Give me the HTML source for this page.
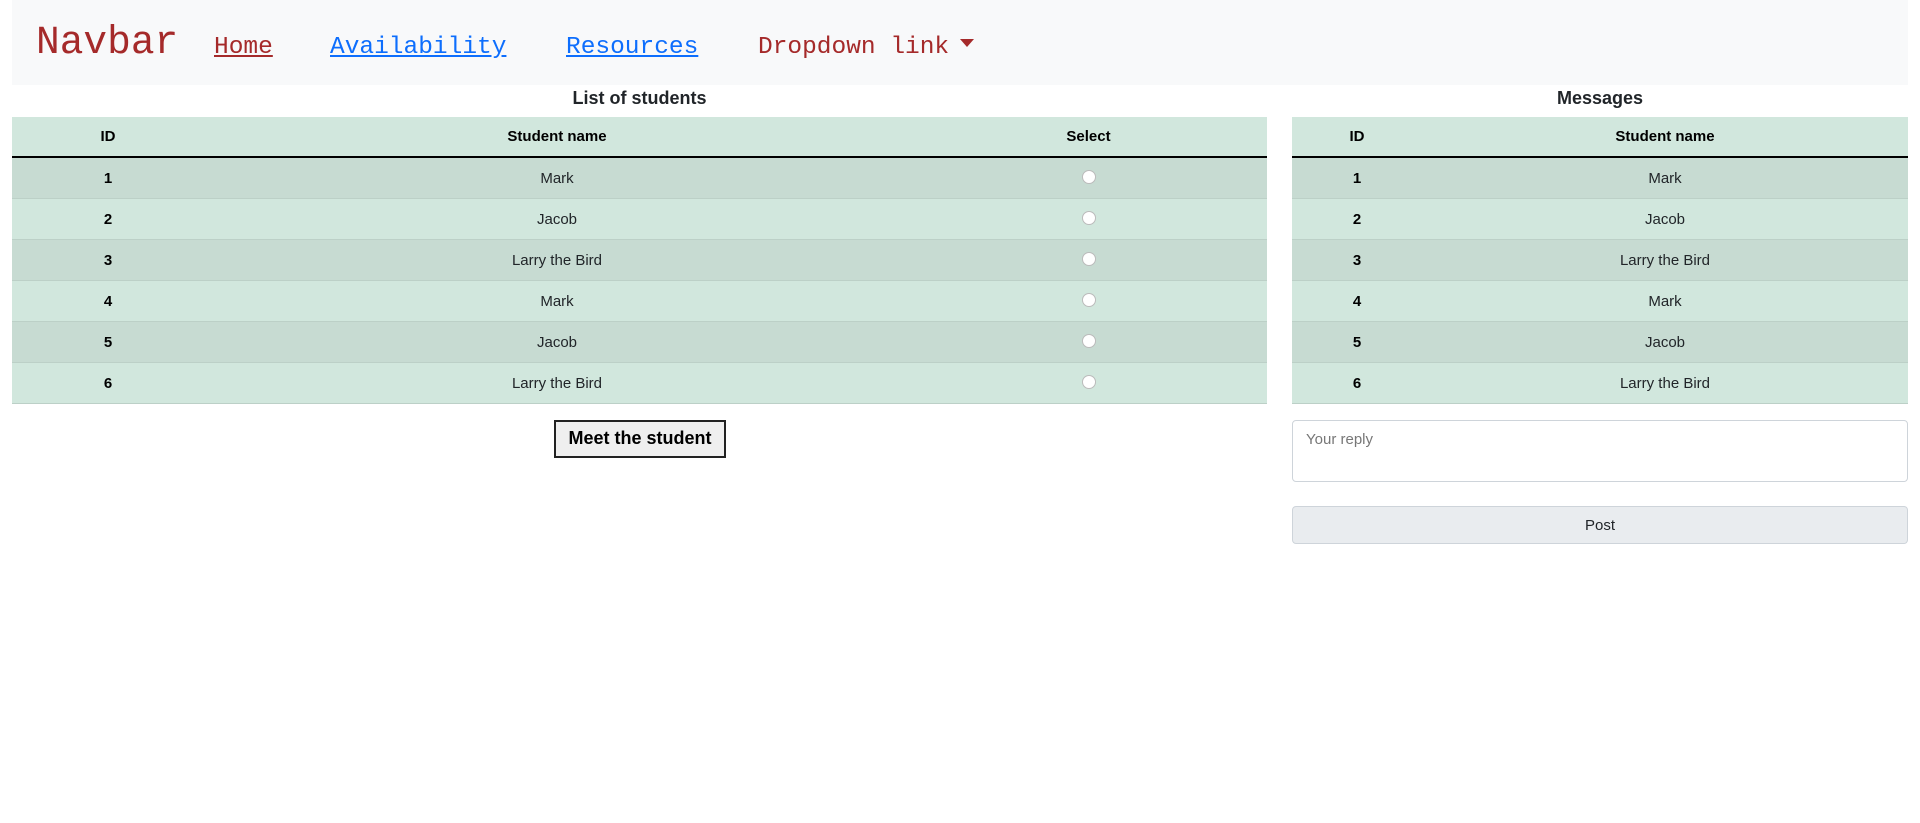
<!DOCTYPE html>
<html><head><meta charset="utf-8"><style>
*{box-sizing:border-box;margin:0;padding:0}
body{width:1920px;height:823px;background:#fff;font-family:"Liberation Sans",sans-serif;color:#212529;position:relative;overflow:hidden}
.nav{position:absolute;left:12px;top:0;width:1896px;height:85px;background:#f8f9fa}
.nav span,.nav a{position:absolute;font-family:"Liberation Mono","Courier New",monospace;white-space:nowrap}
.brand{left:24px;top:20px;font-size:39.5px;color:#a52a2a}
.lk{top:34px;font-size:24.5px;text-decoration:underline}
.title{position:absolute;top:88px;font-size:18px;font-weight:bold;text-align:center;color:#212529}
table{position:absolute;border-collapse:collapse;font-size:15px;table-layout:fixed}
th,td{text-align:center;height:41px;padding:0}
thead tr{background:#d1e7dd;height:40px}
thead th{border-bottom:2px solid #000;height:40px;color:#000}
tbody tr:nth-child(odd){background:#c7dbd2}
tbody tr:nth-child(even){background:#d1e7dd}
tbody tr{border-bottom:1px solid #bcd0c7}
td:first-child{font-weight:bold;color:#000}
td{padding-top:2px}
.radio{display:inline-block;width:14px;height:14px;border-radius:50%;background:#fff;border:1px solid #bbb;vertical-align:middle;margin-top:-4px}
.btn{position:absolute;left:554px;top:420px;width:172px;height:38px;border:2px solid #222;background:#efefef;font-size:18px;font-weight:bold;text-align:center;line-height:33px;color:#000}
.ta{position:absolute;left:1292px;top:420px;width:616px;height:62px;border:1px solid #ced4da;border-radius:4px;background:#fff;color:#777;font-size:15px;padding:10px 13px}
.post{position:absolute;left:1292px;top:506px;width:616px;height:38px;border:1px solid #ced4da;border-radius:4px;background:#e9ecef;font-size:15px;text-align:center;line-height:38px}
</style></head><body>
<div class="nav">
<span class="brand">Navbar</span>
<a class="lk" style="left:202px;color:#a52a2a">Home</a>
<a class="lk" style="left:318px;color:#0d6efd">Availability</a>
<a class="lk" style="left:554px;color:#0d6efd">Resources</a>
<span class="lk" style="left:746px;color:#a52a2a;text-decoration:none">Dropdown link</span>
<span style="left:948px;top:39px;width:0;height:0;border-left:7px solid transparent;border-right:7px solid transparent;border-top:8px solid #a52a2a"></span>
</div>
<div class="title" style="left:12px;width:1255px">List of students</div>
<div class="title" style="left:1292px;width:616px">Messages</div>
<table style="left:12px;top:117px;width:1255px">
<colgroup><col style="width:192px"><col style="width:706px"><col style="width:357px"></colgroup>
<thead><tr><th>ID</th><th>Student name</th><th>Select</th></tr></thead>
<tbody>
<tr><td>1</td><td>Mark</td><td><span class="radio"></span></td></tr>
<tr><td>2</td><td>Jacob</td><td><span class="radio"></span></td></tr>
<tr><td>3</td><td>Larry the Bird</td><td><span class="radio"></span></td></tr>
<tr><td>4</td><td>Mark</td><td><span class="radio"></span></td></tr>
<tr><td>5</td><td>Jacob</td><td><span class="radio"></span></td></tr>
<tr><td>6</td><td>Larry the Bird</td><td><span class="radio"></span></td></tr>
</tbody></table>
<table style="left:1292px;top:117px;width:616px">
<colgroup><col style="width:130px"><col style="width:486px"></colgroup>
<thead><tr><th>ID</th><th>Student name</th></tr></thead>
<tbody>
<tr><td>1</td><td>Mark</td></tr>
<tr><td>2</td><td>Jacob</td></tr>
<tr><td>3</td><td>Larry the Bird</td></tr>
<tr><td>4</td><td>Mark</td></tr>
<tr><td>5</td><td>Jacob</td></tr>
<tr><td>6</td><td>Larry the Bird</td></tr>
</tbody></table>
<div class="btn">Meet the student</div>
<div class="ta">Your reply</div>
<div class="post">Post</div>
</body></html>
